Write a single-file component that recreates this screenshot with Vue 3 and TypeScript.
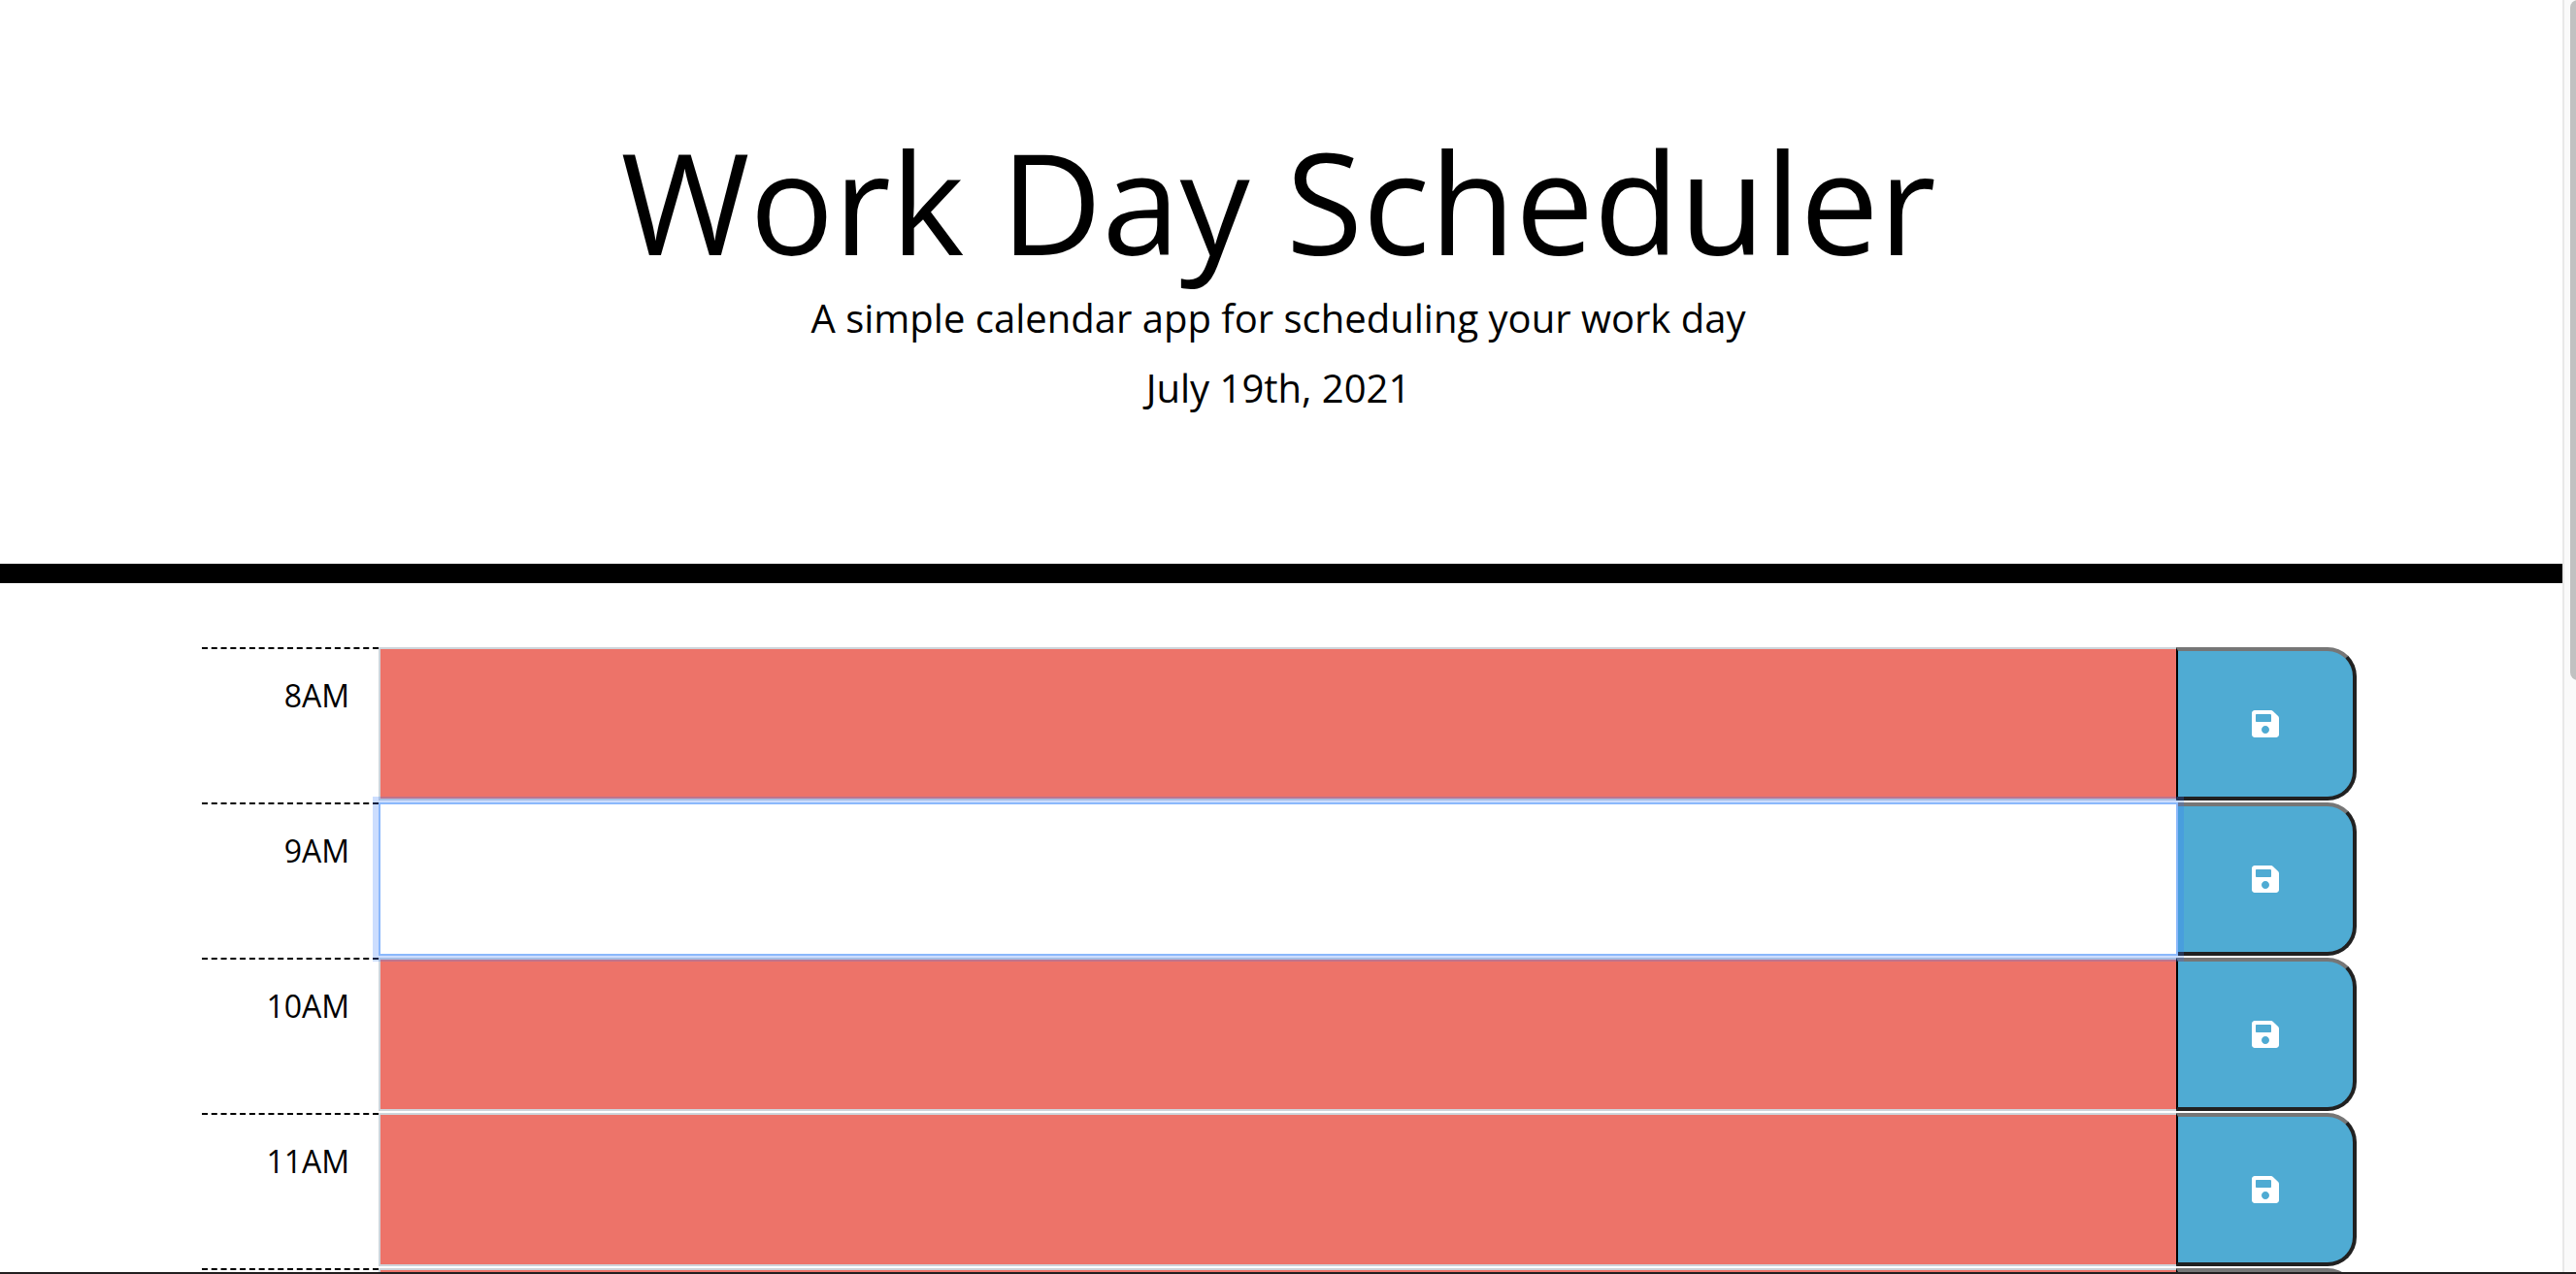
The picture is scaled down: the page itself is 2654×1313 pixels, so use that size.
<script setup lang="ts">
import { reactive } from 'vue'

interface Slot {
  id: string
  label: string
  text: string
  active: boolean
}

const slots = reactive<Slot[]>([
  { id: 'hour-8', label: '8AM', text: '', active: false },
  { id: 'hour-9', label: '9AM', text: '', active: true },
  { id: 'hour-10', label: '10AM', text: '', active: false },
  { id: 'hour-11', label: '11AM', text: '', active: false },
  { id: 'hour-12', label: '', text: '', active: false },
])

function activate(slot: Slot): void {
  slots.forEach((s) => (s.active = s === slot))
}

function save(slot: Slot): void {
  slot.text = slot.text.trim()
}
</script>

<template>
  <div class="window">
    <div class="page">
      <header class="hero">
        <h1>Work Day Scheduler</h1>
        <p>A simple calendar app for scheduling your work day</p>
        <p>July 19th, 2021</p>
      </header>

      <main class="planner">
        <form v-for="slot in slots" :key="slot.id" class="row" @submit.prevent="save(slot)">
          <label class="hour" :for="slot.id">{{ slot.label }}</label>
          <textarea
            :id="slot.id"
            v-model="slot.text"
            class="entry"
            :class="{ active: slot.active }"
            @focus="activate(slot)"
          ></textarea>
          <button class="save" type="submit" aria-label="Save">
            <svg viewBox="0 0 448 512" aria-hidden="true">
              <path
                fill="currentColor"
                d="M433.941 129.941l-83.882-83.882A48 48 0 0 0 316.118 32H48C21.49 32 0 53.49 0 80v352c0 26.51 21.49 48 48 48h352c26.51 0 48-21.49 48-48V163.882a48 48 0 0 0-14.059-33.941zM224 416c-35.346 0-64-28.654-64-64 0-35.346 28.654-64 64-64s64 28.654 64 64c0 35.346-28.654 64-64 64zm96-304.52V212c0 6.627-5.373 12-12 12H76c-6.627 0-12-5.373-12-12V108c0-6.627 5.373-12 12-12h228.52c3.183 0 6.235 1.243 8.485 3.515l3.48 3.48A11.996 11.996 0 0 1 320 111.48z"
              />
            </svg>
          </button>
        </form>
      </main>
    </div>
    <div class="track" aria-hidden="true"><div class="thumb"></div></div>
  </div>
</template>

<style>
body {
  margin: 0;
  background: #fff;
}
</style>

<style scoped>
.window {
  box-sizing: border-box;
  display: flex;
  height: 100vh;
  overflow: hidden;
  border-bottom: 2px solid #231f20;
  font-family: 'Open Sans', 'Noto Sans', sans-serif;
  color: #000;
}

.page {
  flex: 1;
  min-width: 0;
  overflow-y: auto;
  scrollbar-width: none;
}

.hero {
  padding: 128px 6px 151px 0;
  border-bottom: 20px solid #000;
  text-align: center;
}

.hero h1 {
  margin: 0 0 12px;
  font-size: 144px;
  font-weight: 400;
  line-height: 158px;
}

.hero p {
  margin: 0;
  font-size: 40px;
  line-height: 60px;
}

.hero p + p {
  margin-top: 12px;
}

.planner {
  padding: 66px 212px 0 208px;
}

.row {
  display: grid;
  grid-template-columns: 182px 1fr 184px;
  height: 160px;
}

.hour {
  padding: 24px 30px 0 0;
  border-top: 2px dashed #000;
  font-size: 32px;
  line-height: 48px;
  text-align: right;
}

.entry {
  box-sizing: border-box;
  height: 158px;
  margin: 0;
  padding: 12px 24px;
  border: 2px solid #ced4da;
  border-radius: 0;
  outline: none;
  resize: none;
  background: #ed7369;
  color: #fff;
  font: inherit;
  font-size: 32px;
}

.entry.active {
  position: relative;
  z-index: 1;
  border-color: #8bb8fb;
  background: #fff;
  color: #495057;
  box-shadow: 0 0 0 6px rgba(53, 118, 252, 0.25);
}

.save {
  display: flex;
  align-items: center;
  justify-content: center;
  box-sizing: border-box;
  height: 158px;
  margin: 0 0 0 -2px;
  padding: 0;
  border: 4px solid;
  border-color: #767676 #212121 #212121 #000;
  border-left-width: 2px;
  border-radius: 0 30px 30px 0;
  background: #4fabd3;
  color: #fff;
  cursor: pointer;
}

.save svg {
  width: 28px;
  height: 32px;
}

.track {
  box-sizing: border-box;
  width: 14px;
  padding-left: 6px;
  border-left: 2px solid #e8e8e8;
  background: #fafafa;
  overflow: hidden;
}

.thumb {
  width: 16px;
  height: calc(53% + 6px);
  border-radius: 8px;
  background: #c1c1c1;
}
</style>
